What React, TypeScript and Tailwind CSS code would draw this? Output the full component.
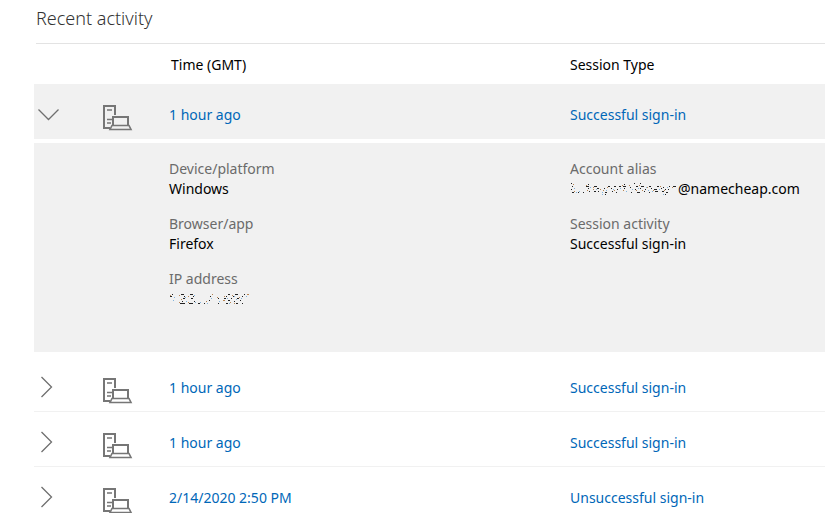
import { useState } from 'react';

type Activity = {
  id: number;
  time: string;
  session: string;
};

const activities: Activity[] = [
  { id: 1, time: '1 hour ago', session: 'Successful sign-in' },
  { id: 2, time: '1 hour ago', session: 'Successful sign-in' },
  { id: 3, time: '1 hour ago', session: 'Successful sign-in' },
  { id: 4, time: '2/14/2020 2:50 PM', session: 'Unsuccessful sign-in' }
];

function Chevron({ open }: { open: boolean }) {
  return open ? (
    <svg width="22" height="22" viewBox="0 0 22 22" fill="none" stroke="#6f6f6f" strokeWidth="1.3">
      <path d="M0.5 6.5 10.5 16.5 20.5 6.5" />
    </svg>
  ) : (
    <svg width="22" height="22" viewBox="0 0 22 22" fill="none" stroke="#6f6f6f" strokeWidth="1.3">
      <path d="M3.5 1 13.5 11 3.5 21" />
    </svg>
  );
}

function DeviceIcon() {
  return (
    <svg width="30" height="26" viewBox="0 0 30 26" fill="none" stroke="#767676" strokeWidth="2">
      <path d="M7 23H1V1h11v9" />
      <path d="M4 5h5M4 14.5h5M4 18h4" strokeWidth="1.6" />
      <path d="M10 20v-8h15v8" />
      <path d="M9 20.5h17l2 4H7z" strokeWidth="1.6" />
    </svg>
  );
}

// What is left of a value that has been rubbed out
function ErasedAddress() {
  return (
    <svg role="img" aria-label="Hidden IP address" width="82" height="13" viewBox="0 0 82 13" shapeRendering="crispEdges" strokeWidth="1">
      <path
        stroke="#222"
        d="M3 1.5h1M12 1.5h3M21 1.5h3M59 1.5h2M66 1.5h3M75 1.5h1M1 3.5h2M15 3.5h1M24 3.5h1M41 3.5h1M57 3.5h1M64 3.5h1M73 3.5h1M14 5.5h2M22 5.5h2M49 5.5h1M55 5.5h2M62 5.5h1M68 5.5h2M40 7.5h1M13 8.5h1M25 8.5h1M59 7.5h2M65 8.5h1M71 7.5h1M11 10.5h5M20 10.5h4M29 10.5h2M35 10.5h1M49 10.5h1M57 10.5h2M67 10.5h2M73 10.5h1"
      />
      <path
        stroke="#b98552"
        d="M1 2.5h1M10 2.5h1M19 3.5h1M43 1.5h1M55 3.5h1M63 2.5h1M78 1.5h2M12 6.5h1M37 8.5h1M48 4.5h1M54 7.5h2M61 9.5h1M70 4.5h1M10 9.5h1M19 9.5h1M65 10.5h1"
      />
      <path
        stroke="#82b4dc"
        d="M5 4.5h1M16 4.5h1M25 2.5h1M42 5.5h1M58 5.5h1M65 3.5h1M72 5.5h1M4 7.5h1M26 9.5h1M38 10.5h1M50 8.5h1M60 10.5h1M67 6.5h1M77 3.5h1M31 9.5h1M17 8.5h1"
      />
    </svg>
  );
}

function ErasedAlias() {
  return (
    <svg role="img" aria-label="Hidden alias" width="108" height="15" viewBox="0 0 108 15" shapeRendering="crispEdges" strokeWidth="1">
      <path
        stroke="#222"
        d="M1 1.5h1M18 2.5h1M54 2.5h1M64 1.5h1M70 1.5h1M2 4.5h1M16 4.5h3M24 4.5h3M38 4.5h2M44 4.5h2M49 4.5h2M53 4.5h3M60 5.5h1M66 4.5h2M71 4.5h3M79 4.5h2M87 4.5h2M93 5.5h1M99 4.5h1M103 4.5h3M1 7.5h1M18 6.5h1M27 6.5h2M34 6.5h1M41 6.5h1M47 7.5h1M54 6.5h1M65 7.5h1M70 6.5h1M75 7.5h1M81 6.5h1M84 7.5h3M91 6.5h1M95 7.5h1M98 7.5h1M2 10.5h2M8 10.5h1M13 10.5h1M19 9.5h1M24 9.5h2M28 9.5h1M35 10.5h2M42 9.5h1M46 10.5h1M61 10.5h1M67 10.5h3M74 9.5h1M79 10.5h1M85 9.5h3M92 9.5h2M96 10.5h2M95 12.5h1M35 12.5h1"
      />
      <path
        stroke="#b98552"
        d="M3 2.5h1M16 3.5h1M23 5.5h1M37 5.5h1M52 3.5h1M59 3.5h1M69 3.5h1M77 5.5h1M90 4.5h1M102 5.5h1M4 9.5h1M17 8.5h1M23 7.5h1M33 8.5h1M44 8.5h1M53 8.5h1M66 8.5h1M72 8.5h1M83 8.5h1M94 8.5h1M30 7.5h1"
      />
      <path
        stroke="#82b4dc"
        d="M4 6.5h1M9 9.5h1M20 5.5h1M26 7.5h1M32 10.5h1M36 8.5h1M43 7.5h1M50 6.5h1M56 9.5h1M62 7.5h1M68 6.5h1M76 5.5h1M78 8.5h1M82 9.5h1M89 7.5h1M97 5.5h1M32 12.5h1M93 12.5h1M6 10.5h1"
      />
    </svg>
  );
}

function Field({ label, children }: { label: string; children: React.ReactNode }) {
  return (
    <div className="mb-[15px]">
      <dt className="text-[#6b6b6b]">{label}</dt>
      <dd className="flex h-5 items-center text-black">{children}</dd>
    </div>
  );
}

export default function App() {
  const [openId, setOpenId] = useState<number | null>(1);

  return (
    <main className="min-h-screen bg-white pl-[34px] font-['Noto_Sans','Open_Sans',sans-serif] text-[14px] leading-5 text-black">
      <h1 className="ml-0.5 h-11 border-b border-[#e3e3e3] pt-1.5 text-[18px] leading-6 font-light text-[#333]">
        Recent activity
      </h1>
      <table className="w-full table-fixed border-separate border-spacing-0 text-left">
        <colgroup>
          <col className="w-[69px]" />
          <col className="w-[66px]" />
          <col className="w-[401px]" />
          <col />
        </colgroup>
        <thead>
          <tr className="h-10">
            <td />
            <td />
            <th className="p-0 pt-0.5 pl-0.5 font-normal">Time (GMT)</th>
            <th className="p-0 pt-0.5 font-normal">Session Type</th>
          </tr>
        </thead>
        {activities.map((item) => {
          const open = item.id === openId;
          const cell = open ? 'border-b border-[#f1f1f1] bg-[#f1f1f1] p-0' : 'border-b border-[#f1f1f1] p-0';
          return (
            <tbody key={item.id}>
              <tr className="h-[55px]">
                <td className={cell}>
                  <button
                    type="button"
                    aria-label="Toggle details"
                    aria-expanded={open}
                    className="block pt-1.5 pl-1"
                    onClick={() => setOpenId(open ? null : item.id)}
                  >
                    <Chevron open={open} />
                  </button>
                </td>
                <td className={cell}>
                  <div className="pt-3.5">
                    <DeviceIcon />
                  </div>
                </td>
                <td className={cell}>
                  <a href="#" className="block pt-2 text-[#0067b8]">{item.time}</a>
                </td>
                <td className={cell}>
                  <a href="#" className="block pt-2 text-[#0067b8]">{item.session}</a>
                </td>
              </tr>
              {open && (
                <tr>
                  <td colSpan={4} className="border-t-4 border-b-[5px] border-white bg-[#f1f1f1] p-0">
                    <div className="grid h-[209px] grid-cols-[401px_1fr] pt-4 pl-[135px]">
                      <dl>
                        <Field label="Device/platform">Windows</Field>
                        <Field label="Browser/app">Firefox</Field>
                        <Field label="IP address">
                          <ErasedAddress />
                        </Field>
                      </dl>
                      <dl>
                        <Field label="Account alias">
                          <ErasedAlias />
                          @namecheap.com
                        </Field>
                        <Field label="Session activity">Successful sign-in</Field>
                      </dl>
                    </div>
                  </td>
                </tr>
              )}
            </tbody>
          );
        })}
      </table>
    </main>
  );
}
